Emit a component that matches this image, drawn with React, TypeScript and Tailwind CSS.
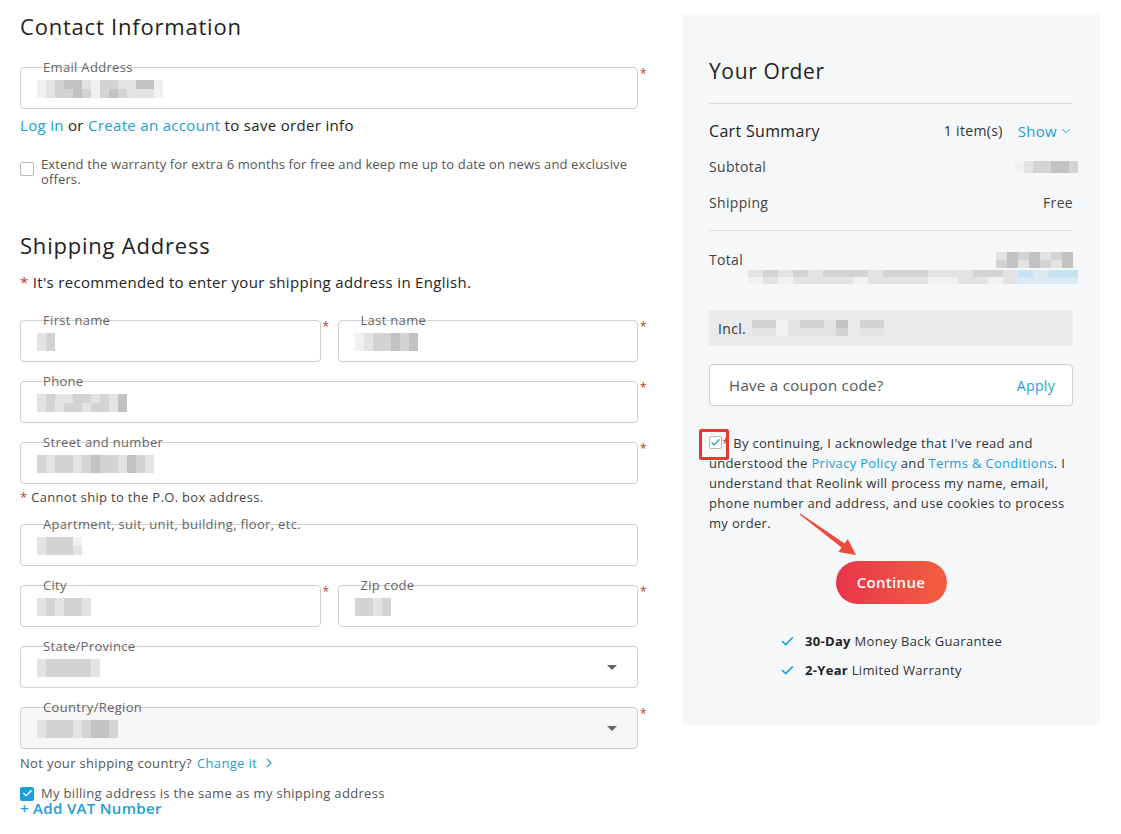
import React from "react";
import { ChevronDown, ChevronRight, Check } from "lucide-react";

// pixelated stand-ins for personal data that is masked out
const SHADES = ["bg-[#f1f1f1]", "bg-[#e3e3e3]", "bg-[#d3d3d3]", "bg-[#c2c2c2]", "bg-[#dbe9f3]", "bg-[#c7e3f3]"];

function Masked({ rows, cell = 9, h = 9 }: { rows: string[]; cell?: number; h?: number }) {
  return (
    <div className="flex flex-col blur-[0.6px]">
      {rows.map((r, i) => (
        <div key={i} className="flex">
          {r.split("").map((c, j) => (
            <span
              key={j}
              className={c === " " ? "" : SHADES[Number(c)]}
              style={{ width: cell, height: h }}
            />
          ))}
        </div>
      ))}
    </div>
  );
}

function Field({
  label,
  rows,
  required = true,
  select = false,
  disabled = false,
}: {
  label: string;
  rows: string[];
  required?: boolean;
  select?: boolean;
  disabled?: boolean;
}) {
  return (
    <div className="flex">
      <div
        className={`relative flex-1 h-[42px] rounded-[4px] border border-[#cfcfcf] flex items-center pl-[16px] pr-[20px] ${
          disabled ? "bg-[#f5f6f8]" : "bg-white"
        }`}
      >
        <span className="absolute left-[22px] top-[-9px] text-[13px] leading-[16px] text-[#666]">{label}</span>
        <div className="mt-[2px]">
          <Masked rows={rows} />
        </div>
        {select && (
          <span className="ml-auto w-0 h-0 border-l-[5px] border-r-[5px] border-t-[5px] border-l-transparent border-r-transparent border-t-[#666]" />
        )}
      </div>
      <span className="w-[17px] pl-[2px] text-[12px] leading-[14px] text-[#c0392b]">{required ? "*" : ""}</span>
    </div>
  );
}

function CheckBox({ checked }: { checked: boolean }) {
  return checked ? (
    <span className="inline-flex w-[14px] h-[14px] shrink-0 rounded-[2px] bg-[#1a9fd8] items-center justify-center">
      <Check size={11} strokeWidth={3} className="text-white" />
    </span>
  ) : (
    <span className="inline-block w-[14px] h-[14px] shrink-0 rounded-[2px] border border-[#bbb] bg-white" />
  );
}

export default function App() {
  return (
    <div className="min-h-screen bg-white text-[#333] tracking-[0.02em] font-['Open_Sans','Liberation_Sans',sans-serif]">
      <div className="flex items-start pt-[12px] pl-[20px]">
        {/* checkout form */}
        <div className="w-[635px]">
          <h2 className="text-[22px] leading-[28px] tracking-[0.036em] text-[#222]">Contact Information</h2>
          <div className="mt-[27px]">
            <Field label="Email Address" rows={["01233102211330", "01223202321110"]} />
          </div>
          <p className="mt-[5px] text-[15px] leading-[22px] text-[#222]">
            <span className="text-[#1a9fd8]">Log in</span> or{" "}
            <span className="text-[#1a9fd8]">Create an account</span> to save order info
          </p>
          <div className="mt-[21px] flex gap-[7px]">
            <span className="mt-[1px]">
              <CheckBox checked={false} />
            </span>
            <p className="text-[13px] leading-[15px] tracking-[0.01em] text-[#555]">
              Extend the warranty for extra 6 months for free and keep me up to date on news and exclusive offers.
            </p>
          </div>

          <h2 className="mt-[44px] text-[22px] leading-[28px] tracking-[0.036em] text-[#222]">Shipping Address</h2>
          <p className="mt-[12px] text-[15px] leading-[22px] text-[#222]">
            <span className="text-[#c0392b]">*</span> It's recommended to enter your shipping address in English.
          </p>

          <div className="mt-[27px] flex flex-col gap-[19px]">
            <div className="grid grid-cols-2">
              <Field label="First name" rows={["12", "12"]} />
              <Field label="Last name" rows={["0122323", "0122323"]} />
            </div>
            <Field label="Phone" rows={["1211221213", "1212212213"]} />
            <Field label="Street and number" rows={["2122123221321", "2122123221321"]} />
          </div>
          <p className="mt-[4px] text-[13px] leading-[18px] text-[#444]">
            <span className="text-[#c0392b]">*</span> Cannot ship to the P.O. box address.
          </p>

          <div className="mt-[18px] flex flex-col gap-[19px]">
            <Field label="Apartment, suit, unit, building, floor, etc." rows={["12220", "12221"]} required={false} />
            <div className="grid grid-cols-2">
              <Field label="City" rows={["121221", "121221"]} />
              <Field label="Zip code" rows={["2212", "2212"]} />
            </div>
            <Field label="State/Province" rows={["1222221", "1222221"]} required={false} select />
            <Field label="Country/Region" rows={["122212332", "122212332"]} select disabled />
          </div>

          <p className="mt-[5px] flex items-center text-[13px] leading-[18px] text-[#555]">
            Not your shipping country?<span className="ml-[5px] text-[#1a9fd8]">Change it</span>
            <ChevronRight size={16} strokeWidth={1.6} className="ml-[4px] text-[#1a9fd8]" />
          </p>
          <div className="mt-[14px] flex items-center gap-[7px]">
            <CheckBox checked />
            <span className="text-[13px] leading-[15px] text-[#555]">My billing address is the same as my shipping address</span>
          </div>
          <p className="text-[15px] leading-[15px] font-semibold text-[#1a9fd8]">+ Add VAT Number</p>
        </div>

        {/* order summary */}
        <aside className="relative ml-[27px] mt-[2px] w-[418px] bg-[#f6f7f9] pt-[43px] pb-[45px] px-[27px]">
          <h2 className="text-[21px] leading-[28px] tracking-[0.03em] text-[#222]">Your Order</h2>
          <div className="mt-[18px] border-t border-[#dcdcdc]" />

          <div className="mt-[15px] flex items-center text-[16px] leading-[24px]">
            <span className="font-medium text-[#222]">Cart Summary</span>
            <span className="ml-auto text-[14px] text-[#333]">1 item(s)</span>
            <span className="ml-[15px] flex items-center text-[15px] text-[#1a9fd8]">
              Show
              <ChevronDown size={14} strokeWidth={1.6} className="ml-[2px]" />
            </span>
          </div>
          <div className="mt-[14px] flex items-center text-[14px] leading-[20px] text-[#444]">
            <span>Subtotal</span>
            <span className="ml-auto mr-[-5px]">
              <Masked rows={["0122332"]} cell={9} h={12} />
            </span>
          </div>
          <div className="mt-[16px] flex items-center text-[14px] leading-[20px] text-[#444]">
            <span>Shipping</span>
            <span className="ml-auto">Free</span>
          </div>
          <div className="mt-[17px] border-t border-[#dcdcdc]" />

          <div className="mt-[19px] flex items-start text-[14px] leading-[20px] text-[#444]">
            <span>Total</span>
            <span className="ml-auto mt-[2px]">
              <Masked rows={["1323123", "2313213"]} cell={11} h={8} />
            </span>
          </div>
          <div className="flex justify-end mr-[-5px]">
            <Masked rows={["1212122212221112215455", "0101111011110011014444"]} cell={15} h={7} />
          </div>

          <div className="mt-[26px] h-[36px] bg-[#e9eaec] flex items-center pl-[9px] gap-[6px] text-[14px] text-[#333]">
            <span>Incl.</span>
            <Masked rows={["22012213 22", "11011112 11"]} cell={12} h={8} />
          </div>

          <div className="mt-[18px] h-[42px] rounded-[4px] border border-[#cfcfcf] bg-white flex items-center pl-[19px] pr-[17px]">
            <span className="text-[15px] text-[#555]">Have a coupon code?</span>
            <span className="ml-auto text-[14px] text-[#1a9fd8]">Apply</span>
          </div>

          <p className="relative mt-[27px] text-[13px] leading-[20px] text-[#333]">
            <span className="relative top-[3px] inline-block align-top w-[13px] h-[13px]">
              <span className="flex w-[13px] h-[13px] rounded-[2px] border border-[#bbb] bg-white items-center justify-center">
                <Check size={11} strokeWidth={2.6} className="text-[#1a9fd8]" />
              </span>
              <span className="absolute left-[-10px] top-[-7px] w-[30px] h-[31px] border-[3px] border-[#e8392f] rounded-[2px]" />
            </span>
            <span className="text-[#c0392b]">*</span> By continuing, I acknowledge that I've read and understood the{" "}
            <span className="text-[#1a9fd8]">Privacy Policy</span> and{" "}
            <span className="text-[#1a9fd8]">Terms &amp; Conditions</span>. I understand that Reolink will process my
            name, email, phone number and address, and use cookies to process my order.
          </p>

          {/* callout arrow pointing at the button */}
          <svg className="absolute left-[112px] top-[494px]" width="70" height="56" viewBox="0 0 70 56">
            <polygon
              points="5.7,6.4 47.6,39.5 44.4,44.0 62,47 53.8,31.1 50.6,35.5 6.3,5.6"
              fill="#ee4a3a"
            />
          </svg>

          <div className="mt-[28px] flex justify-center">
            <button className="w-[111px] h-[43px] rounded-full bg-gradient-to-r from-[#e8334b] to-[#f25e3f] text-white text-[15px] font-semibold">
              Continue
            </button>
          </div>

          <div className="mt-[27px] mx-auto w-fit flex flex-col gap-[9px] text-[13px] leading-[20px] text-[#333]">
            <div className="flex items-center gap-[10px]">
              <Check size={15} strokeWidth={2.6} className="text-[#1a9fd8]" />
              <span>
                <b className="font-bold text-[#222]">30-Day</b> Money Back Guarantee
              </span>
            </div>
            <div className="flex items-center gap-[10px]">
              <Check size={15} strokeWidth={2.6} className="text-[#1a9fd8]" />
              <span>
                <b className="font-bold text-[#222]">2-Year</b> Limited Warranty
              </span>
            </div>
          </div>
        </aside>
      </div>
    </div>
  );
}
